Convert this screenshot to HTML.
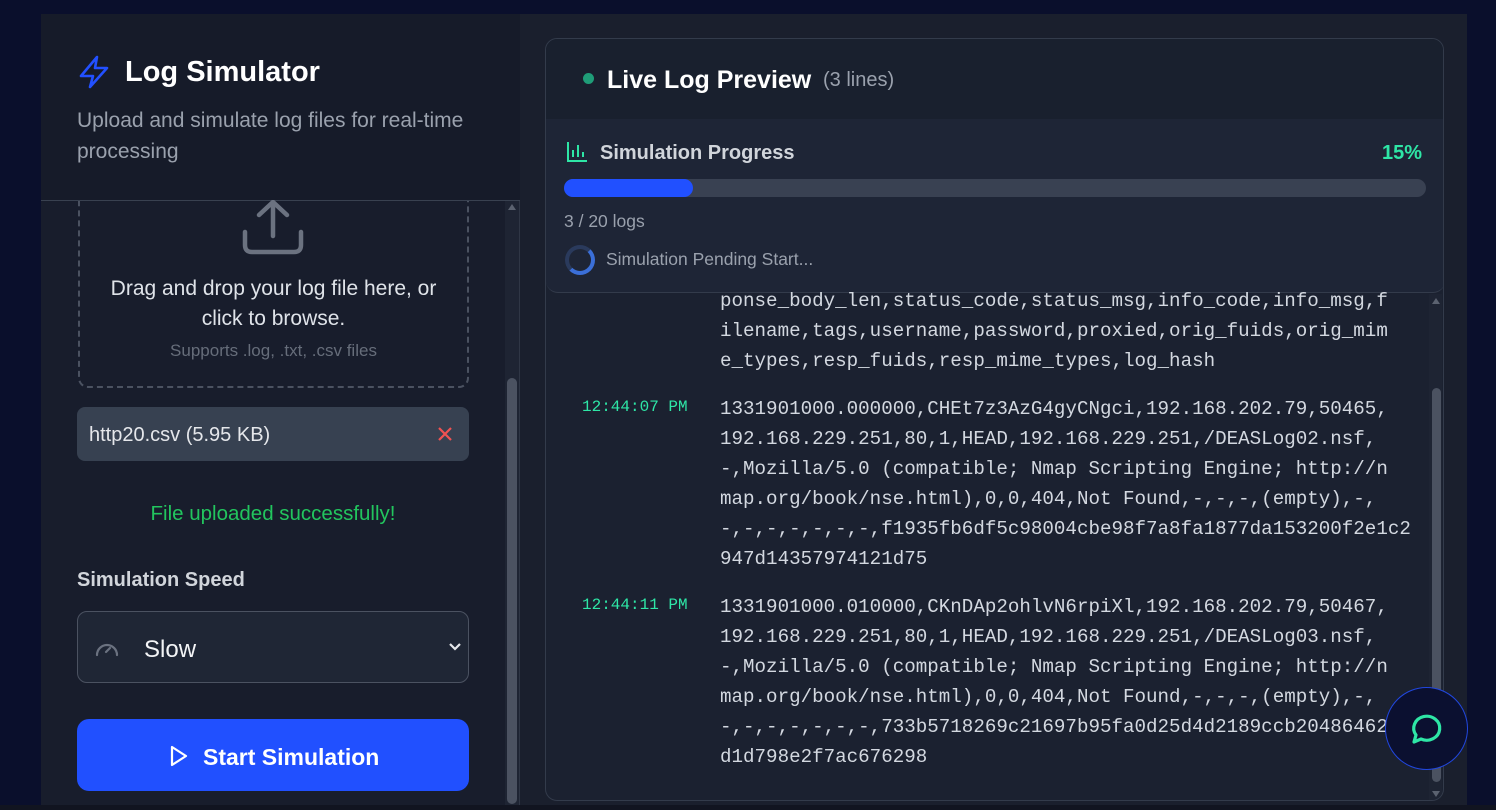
<!DOCTYPE html>
<html><head><meta charset="utf-8"><style>
*{box-sizing:border-box;margin:0;padding:0}
body{width:1496px;height:810px;background:#0a0f2c;overflow:hidden;font-family:"Liberation Sans",sans-serif;position:relative}
.abs{position:absolute}
.main{left:41px;top:14px;width:1426px;height:792px;background:#1a1f2d}
.left{left:41px;top:14px;width:479px;height:792px;background:#181d2c;border-right:1px solid #2f3645}
.lhead{left:41px;top:14px;width:479px;height:187px;background:#161b29;border-bottom:1px solid #394150}
.card{left:545px;top:38px;width:899px;height:763px;border:1px solid #333b4b;border-radius:12px;background:#1b2130;overflow:hidden}
.line{position:absolute;left:174px;font-size:19.2px;line-height:30px;color:#d3d8e0;white-space:pre;font-family:"Liberation Mono","DejaVu Sans Mono",monospace}
.ts{position:absolute;left:36px;font-size:16px;color:#2ee6a6;font-family:"Liberation Mono","DejaVu Sans Mono",monospace}
</style></head><body>
<div class="abs main"></div>
<div class="abs left"></div>
<div class="abs lhead"></div>
<svg class="abs" style="left:78px;top:55px" width="32" height="34" viewBox="0 0 32 34"><path d="M19 2 L3 21 H15 L12 32 L29 13 H17 Z" fill="none" stroke="#2250ff" stroke-width="2.6" stroke-linejoin="round"/></svg>
<div class="abs" style="left:125px;top:56px;font-size:29px;font-weight:bold;color:#fff">Log Simulator</div>
<div class="abs" style="left:77px;top:105px;width:420px;font-size:21px;line-height:31px;color:#9aa1ad">Upload and simulate log files for real-time processing</div>
<!-- dropzone -->
<div class="abs" style="left:78px;top:160px;width:391px;height:228px;border:2.5px dashed #4b5261;border-radius:10px;clip-path:inset(41px -5px -5px -5px)"></div>
<svg class="abs" style="left:242px;top:200px" width="62" height="55" viewBox="0 0 62 55"><path d="M31 2 V36 M17 15 L31 2 L45 15 M3 32 V45 Q3 52 10 52 H52 Q59 52 59 45 V32" fill="none" stroke="#6b7280" stroke-width="4.5" stroke-linecap="round" stroke-linejoin="round"/></svg>
<div class="abs" style="left:70px;top:274px;width:407px;text-align:center;font-size:21px;line-height:30px;color:#dfe3e9">Drag and drop your log file here, or<br>click to browse.</div>
<div class="abs" style="left:78px;top:341px;width:391px;text-align:center;font-size:17px;color:#666d7a">Supports .log, .txt, .csv files</div>
<div class="abs" style="left:77px;top:407px;width:392px;height:54px;background:#374151;border-radius:8px"></div>
<div class="abs" style="left:89px;top:424px;font-size:20px;color:#e5e7eb">http20.csv (5.95 KB)</div>
<svg class="abs" style="left:437px;top:426px" width="16" height="16" viewBox="0 0 16 16"><path d="M2 2 L14 14 M14 2 L2 14" stroke="#f05252" stroke-width="2.2"/></svg>
<div class="abs" style="left:77px;top:502px;width:392px;text-align:center;font-size:20.5px;color:#22c55e">File uploaded successfully!</div>
<div class="abs" style="left:77px;top:569px;font-size:20px;font-weight:bold;color:#d1d5db">Simulation Speed</div>
<div class="abs" style="left:77px;top:611px;width:392px;height:72px;background:#1f2635;border:1px solid #4b5261;border-radius:10px"></div>
<svg class="abs" style="left:95px;top:638px" width="24" height="20" viewBox="0 0 24 20"><path d="M2 17 A10 10 0 1 1 22 17" fill="none" stroke="#6b7280" stroke-width="2.2" stroke-linecap="round"/><path d="M11 14 L15 10" stroke="#6b7280" stroke-width="2.2" stroke-linecap="round"/></svg>
<div class="abs" style="left:144px;top:636px;font-size:24px;color:#f3f4f6">Slow</div>
<svg class="abs" style="left:448px;top:642px" width="14" height="10" viewBox="0 0 14 10"><path d="M2 2 L7 7 L12 2" fill="none" stroke="#e5e7eb" stroke-width="2.2"/></svg>
<div class="abs" style="left:77px;top:719px;width:392px;height:72px;background:#2150ff;border-radius:12px"></div>
<svg class="abs" style="left:169px;top:745px" width="20" height="22" viewBox="0 0 20 22"><path d="M3 2 L17 11 L3 20 Z" fill="none" stroke="#fff" stroke-width="2.2" stroke-linejoin="round"/></svg>
<div class="abs" style="left:203px;top:744px;font-size:23px;font-weight:bold;color:#fff">Start Simulation</div>
<!-- left scrollbar -->
<div class="abs" style="left:505px;top:201px;width:14px;height:604px;background:#1e2433"></div>
<div class="abs" style="left:508px;top:204px;width:0;height:0;border-left:4px solid transparent;border-right:4px solid transparent;border-bottom:6px solid #5b6270"></div>
<div class="abs" style="left:507px;top:378px;width:10px;height:426px;background:#4b5261;border-radius:5px"></div>
<!-- right card -->
<div class="abs card">
 <div class="abs" style="left:0;top:0;width:899px;height:80px;background:#19202e"></div>
 <div class="abs" style="left:37px;top:34px;width:11px;height:11px;border-radius:50%;background:#1f9d78"></div>
 <div class="abs" style="left:61px;top:27px;font-size:25px;font-weight:bold;color:#fff">Live Log Preview</div>
 <div class="abs" style="left:277px;top:30px;font-size:20px;color:#9aa1ad">(3 lines)</div>
 <div class="abs" style="left:0;top:80px;width:899px;height:174px;background:#1e2536;border-bottom:1px solid #333b4b;border-radius:0 0 12px 12px"></div>
 <svg class="abs" style="left:20px;top:102px" width="22" height="22" viewBox="0 0 22 22"><path d="M2 1 V20 H21 M7 16 V9 M12 16 V4 M17 16 V11" fill="none" stroke="#2ee6a6" stroke-width="2"/></svg>
 <div class="abs" style="left:54px;top:103px;font-size:20px;font-weight:bold;color:#d1d5db">Simulation Progress</div>
 <div class="abs" style="left:836px;top:103px;font-size:20px;font-weight:bold;color:#2ee6a6">15%</div>
 <div class="abs" style="left:18px;top:140px;width:862px;height:18px;background:#394152;border-radius:9px"></div>
 <div class="abs" style="left:18px;top:140px;width:129px;height:18px;background:#2150ff;border-radius:9px"></div>
 <div class="abs" style="left:18px;top:172px;font-size:17.5px;color:#9aa1ad">3 / 20 logs</div>
 <div class="abs" style="left:19px;top:206px;width:30px;height:30px;border-radius:50%;border:4px solid #2a3a5c;border-right-color:#3b6fd8;border-bottom-color:#3b6fd8"></div>
 <div class="abs" style="left:60px;top:210px;font-size:17.5px;color:#9aa1ad">Simulation Pending Start...</div>
 <!-- logs -->
 <div class="line" style="top:247px">ponse_body_len,status_code,status_msg,info_code,info_msg,f
ilename,tags,username,password,proxied,orig_fuids,orig_mim
e_types,resp_fuids,resp_mime_types,log_hash</div>
 <div class="ts" style="top:359px">12:44:07 PM</div>
 <div class="line" style="top:355px">1331901000.000000,CHEt7z3AzG4gyCNgci,192.168.202.79,50465,
192.168.229.251,80,1,HEAD,192.168.229.251,/DEASLog02.nsf,
-,Mozilla/5.0 (compatible; Nmap Scripting Engine; http://n
map.org/book/nse.html),0,0,404,Not Found,-,-,-,(empty),-,
-,-,-,-,-,-,-,f1935fb6df5c98004cbe98f7a8fa1877da153200f2e1c2
947d14357974121d75</div>
 <div class="ts" style="top:557px">12:44:11 PM</div>
 <div class="line" style="top:553px">1331901000.010000,CKnDAp2ohlvN6rpiXl,192.168.202.79,50467,
192.168.229.251,80,1,HEAD,192.168.229.251,/DEASLog03.nsf,
-,Mozilla/5.0 (compatible; Nmap Scripting Engine; http://n
map.org/book/nse.html),0,0,404,Not Found,-,-,-,(empty),-,
-,-,-,-,-,-,-,733b5718269c21697b95fa0d25d4d2189ccb2048646274
d1d798e2f7ac676298</div>
 <div class="abs" style="left:883px;top:255px;width:13px;height:508px;background:#1e2433"></div>
 <div class="abs" style="left:886px;top:259px;width:0;height:0;border-left:4px solid transparent;border-right:4px solid transparent;border-bottom:6px solid #5b6270"></div>
 <div class="abs" style="left:886px;top:349px;width:9px;height:394px;background:#4b5261;border-radius:5px"></div>
 <div class="abs" style="left:886px;top:752px;width:0;height:0;border-left:4px solid transparent;border-right:4px solid transparent;border-top:6px solid #5b6270"></div>
</div>
<!-- chat -->
<div class="abs" style="left:1385px;top:687px;width:83px;height:83px;border-radius:50%;background:#0b1030;border:1.5px solid #2147e0"></div>
<svg class="abs" style="left:1408px;top:712px" width="36" height="34" viewBox="0 0 36 34"><path d="M6 30 L8 23 A13 12 0 1 1 13 27 Z" fill="none" stroke="#2ee6a6" stroke-width="3.2" stroke-linejoin="round"/></svg>
<div class="abs" style="left:0;top:805px;width:1496px;height:5px;background:#111420"></div>
</body></html>
